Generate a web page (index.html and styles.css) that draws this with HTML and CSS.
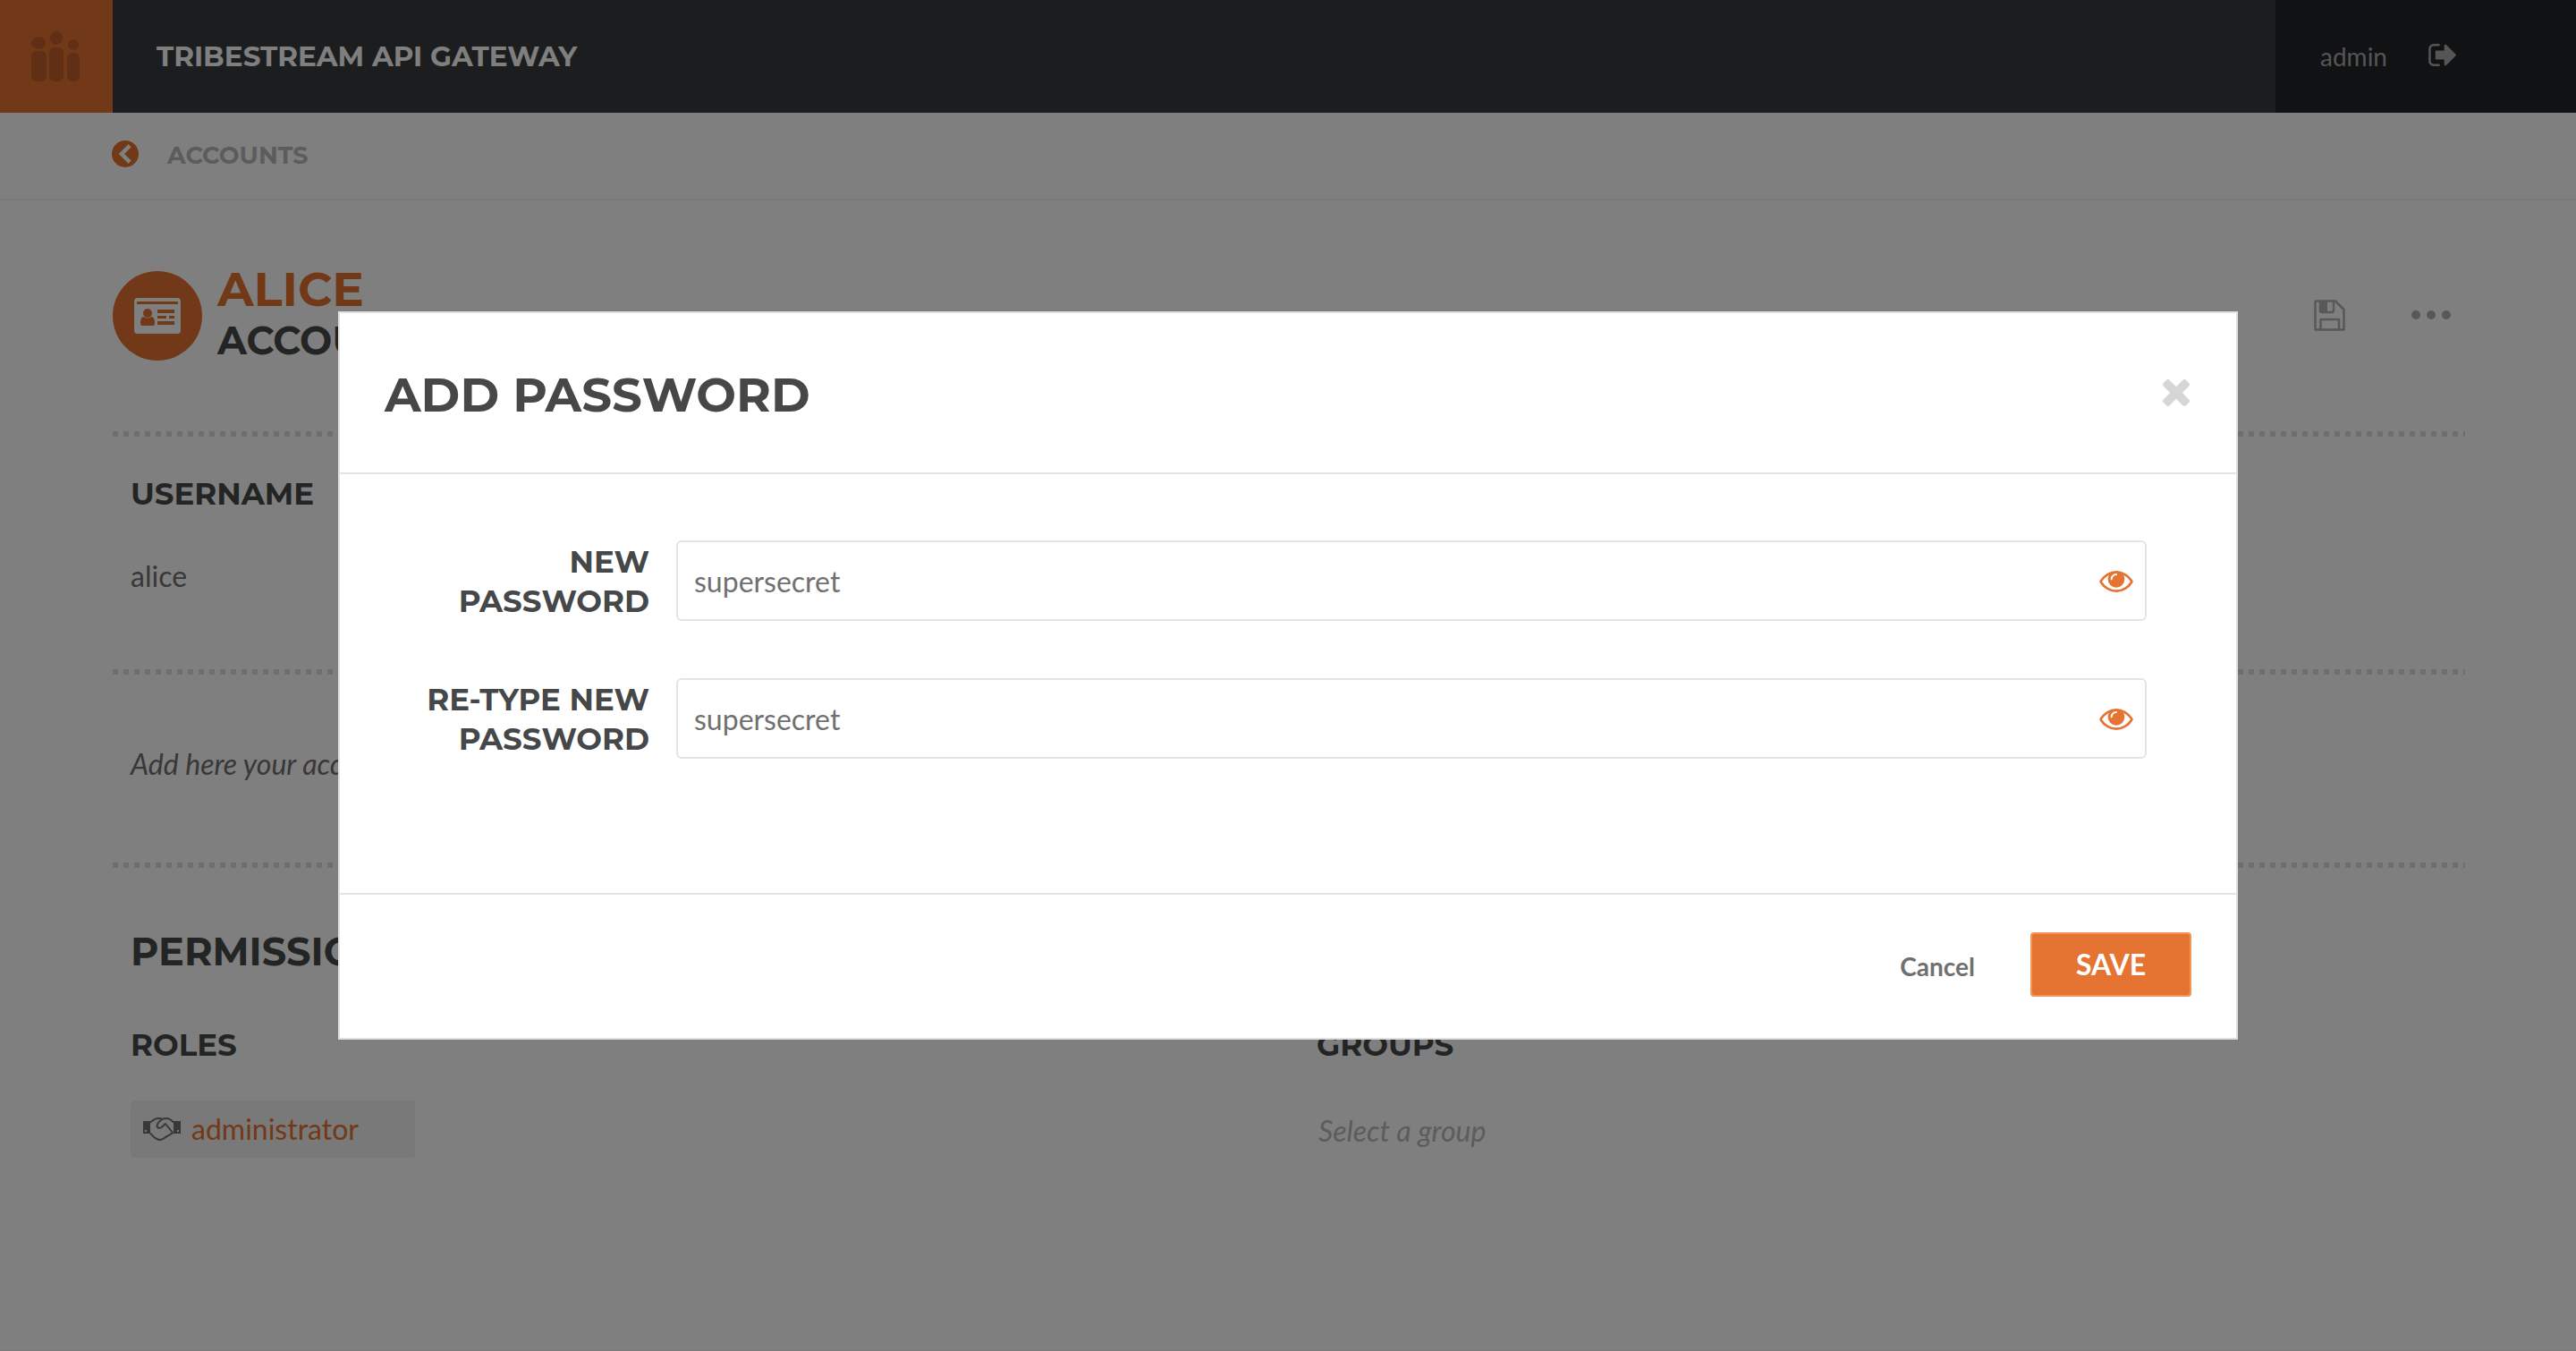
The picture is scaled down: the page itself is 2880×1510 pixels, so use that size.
FILE: index.html
```html
<!DOCTYPE html>
<html lang="en">
<head>
<meta charset="utf-8">
<title>Tribestream API Gateway</title>
<link rel="stylesheet" href="styles.css">
</head>
<body>
<div class="page">
  <header class="topbar">
    <a class="logo" href="#" aria-label="Home">
      <svg class="logo-icon" viewBox="0 0 54 56" aria-hidden="true">
        <rect x="0" y="22" width="17" height="34" rx="6"/><rect x="20" y="18" width="16" height="38" rx="6"/><rect x="40" y="24" width="14" height="32" rx="6"/>
        <ellipse cx="8" cy="13" rx="8" ry="7"/><ellipse cx="28" cy="7.500" rx="7" ry="7.500"/><ellipse cx="47" cy="15" rx="6" ry="6"/>
      </svg>
    </a>
    <h1 class="brand">TRIBESTREAM API GATEWAY</h1>
    <div class="session">
      <span class="user">admin</span>
      <button class="icon-button logout" type="button" aria-label="Log out">
        <svg class="logout-icon" viewBox="64 256 1568 1280"><path d="M704 1440q0 4 1 20t.5 26.500-3 23.500-10 19.500-20.500 6.500h-320q-119 0-203.500-84.500t-84.500-203.500v-704q0-119 84.500-203.500t203.500-84.500h320q13 0 22.500 9.500t9.500 22.500q0 4 1 20t.5 26.500-3 23.500-10 19.500-20.500 6.500h-320q-66 0-113 47t-47 113v704q0 66 47 113t113 47h312l11.500 1 11.500 3 8 5.500 7 9 2 13.500zm928-544q0 26-19 45l-544 544q-19 19-45 19t-45-19-19-45v-288h-448q-26 0-45-19t-19-45v-384q0-26 19-45t45-19h448v-288q0-26 19-45t45-19 45 19l544 544q19 19 19 45z"/></svg>
      </button>
    </div>
  </header>
  <nav class="crumbs">
    <a class="crumb" href="#">
      <svg class="back-icon" viewBox="0 0 30 30" aria-hidden="true"><circle cx="15" cy="15" r="15"/><path d="M18.500 7.500 11 15l7.500 7.500" fill="none" stroke="#fff" stroke-width="4.500" stroke-linecap="square"/></svg>
      <span>ACCOUNTS</span>
    </a>
  </nav>
  <main class="content">
    <div class="account-head">
      <span class="badge">
        <svg class="badge-icon" viewBox="0 0 52 40" aria-hidden="true">
          <rect width="52" height="40" rx="4" fill="#fff"/>
          <path d="M3 4h46v3H3zM26 13h19v4H26zM26 20h10v3H26zM39 20h6v3h-6zM26 26h19v4H26z"/>
          <circle cx="15" cy="17" r="5"/><path d="M7 28q0-7 4-7 4 3 8 0 4 0 4 7 0 3-2 3H9q-2 0-2-3z"/>
        </svg>
      </span>
      <div class="account-title">
        <h2 class="account-name">ALICE</h2>
        <p class="account-kind">ACCOUNT</p>
      </div>
      <div class="account-actions">
        <button class="icon-button" type="button" aria-label="Save account">
          <svg class="floppy-icon" viewBox="0 0 35 35"><path d="M3 1.500H24L33.500 11V33.500H1.500V3Q1.500 1.500 3 1.500zM7 2V12Q7 14 9 14H20Q22 14 22 12V2M7.500 33V22H28V33" fill="none" stroke="currentColor" stroke-width="2.500" stroke-linejoin="round"/><path d="M7 2h8v11H7z"/></svg>
        </button>
        <button class="icon-button" type="button" aria-label="More actions">
          <svg class="more-icon" viewBox="0 0 44 10"><circle cx="5" cy="5" r="5"/><circle cx="22" cy="5" r="5"/><circle cx="39" cy="5" r="5"/></svg>
        </button>
      </div>
    </div>
    <section class="block block-user">
      <h3 class="label">USERNAME</h3>
      <p class="value">alice</p>
    </section>
    <section class="block block-note">
      <p class="note">Add here your account</p>
    </section>
    <section class="block block-perms">
      <h2 class="section-title">PERMISSIONS</h2>
      <div class="columns">
        <div class="column">
          <h3 class="label">ROLES</h3>
          <a class="chip" href="#">
            <svg class="shake-icon" viewBox="0 0 42 26" aria-hidden="true">
              <path d="M0 4h8v14H0zM34 4h8v14h-8z"/>
              <path d="M8 5.500Q13 1 17 1q3 0 4 1 2-1 5-1 4 0 8 4.500M8 17.500Q14 25 19 25q3 0 6-3 6-3 9-5.500M21 2q-6 5-5.500 8 1.500 3 5 1L25 7l8 10" fill="none" stroke="currentColor" stroke-width="2" stroke-linejoin="round"/>
              <path d="M2 14h2v2H2zM38 14h2v2h-2z" fill="#f2f2f2"/>
            </svg>
            <span>administrator</span>
          </a>
        </div>
        <div class="column">
          <h3 class="label">GROUPS</h3>
          <p class="placeholder">Select a group</p>
        </div>
      </div>
    </section>
  </main>
</div>

<div class="backdrop">
  <form class="modal" role="dialog" aria-labelledby="modal-title">
    <header class="modal-head">
      <h2 class="modal-title" id="modal-title">ADD PASSWORD</h2>
      <button class="icon-button close" type="button" aria-label="Close">
        <svg class="close-icon" viewBox="302 366 1188 1188"><path d="M1490 1322q0 40-28 68l-136 136q-28 28-68 28t-68-28l-294-294-294 294q-28 28-68 28t-68-28l-136-136q-28-28-28-68t28-68l294-294-294-294q-28-28-28-68t28-68l136-136q28-28 68-28t68 28l294 294 294-294q28-28 68-28t68 28l136 136q28 28 28 68t-28 68l-294 294 294 294q28 28 28 68z"/></svg>
      </button>
    </header>
    <div class="modal-body">
      <div class="field">
        <label class="field-label" for="pw">NEW PASSWORD</label>
        <div class="field-control">
          <input class="field-input" id="pw" type="text" value="supersecret">
          <button class="icon-button reveal" type="button" aria-label="Hide password">
            <svg class="eye-icon" viewBox="0 384 1792 1152"><path d="M1664 960q-152-236-381-353 61 104 61 225 0 185-131.500 316.500t-316.500 131.500-316.500-131.500-131.500-316.500q0-121 61-225-229 117-381 353 133 205 333.500 326.500t434.500 121.500 434.500-121.500 333.500-326.500zm-720-384q0-20-14-34t-34-14q-125 0-214.500 89.500t-89.500 214.500q0 20 14 34t34 14 34-14 14-34q0-86 61-147t147-61q20 0 34-14t14-34zm848 384q0 34-20 69-140 230-376.500 368.500t-499.500 138.500-499.500-139-376.500-368q-20-35-20-69t20-69q140-229 376.500-368t499.500-139 499.500 139 376.500 368q20 35 20 69z"/></svg>
          </button>
        </div>
      </div>
      <div class="field">
        <label class="field-label" for="pw2">RE-TYPE NEW PASSWORD</label>
        <div class="field-control">
          <input class="field-input" id="pw2" type="text" value="supersecret">
          <button class="icon-button reveal" type="button" aria-label="Hide retyped password">
            <svg class="eye-icon" viewBox="0 384 1792 1152"><path d="M1664 960q-152-236-381-353 61 104 61 225 0 185-131.500 316.500t-316.500 131.500-316.500-131.500-131.500-316.500q0-121 61-225-229 117-381 353 133 205 333.500 326.500t434.500 121.500 434.500-121.500 333.500-326.500zm-720-384q0-20-14-34t-34-14q-125 0-214.500 89.500t-89.500 214.500q0 20 14 34t34 14 34-14 14-34q0-86 61-147t147-61q20 0 34-14t14-34zm848 384q0 34-20 69-140 230-376.500 368.500t-499.500 138.500-499.500-139-376.500-368q-20-35-20-69t20-69q140-229 376.500-368t499.500-139 499.500 139 376.500 368q20 35 20 69z"/></svg>
          </button>
        </div>
      </div>
    </div>
    <footer class="modal-foot">
      <button class="cancel" type="button">Cancel</button>
      <button class="save" type="submit">SAVE</button>
    </footer>
  </form>
</div>
</body>
</html>
```
FILE: styles.css
```css
:root {
  --orange: #e57331;
  --ink: #464a48;
  --text: #707070;
  --line: #e4e4e4;
  --display: Montserrat, Inter, "Liberation Sans", sans-serif;
  --body: Lato, "Liberation Sans", sans-serif;
}

* { box-sizing: border-box; }

body {
  margin: 0;
  background: #fff;
  color: var(--text);
  font-family: var(--body);
  font-size: 32px;
  line-height: 44px;
}

h1, h2, h3, p { margin: 0; }

a { color: inherit; text-decoration: none; }

svg { display: block; fill: currentColor; }

button { font-family: inherit; cursor: pointer; }

.icon-button {
  padding: 0;
  border: 0;
  background: none;
  color: inherit;
}

.page { min-height: 100vh; border-bottom: 1px solid #f2f2f2; }

.topbar {
  display: flex;
  height: 126px;
  background: #383b3e;
}

.logo {
  display: flex;
  align-items: flex-start;
  justify-content: center;
  width: 126px;
  padding: 35px 2px 0 0;
  background: var(--orange);
  color: #c05e2a;
}

.logo-icon { width: 54px; height: 56px; }

.brand {
  flex: 1;
  padding-left: 49px;
  color: #fff;
  font: 700 31px/126px var(--display);
}

.session {
  display: flex;
  align-items: center;
  gap: 46px;
  width: 336px;
  padding-left: 50px;
  background: #222427;
  color: #aaa;
  font-size: 28px;
}

.logout { padding-bottom: 4px; }

.logout-icon { width: 31px; height: 25px; }

.crumbs {
  display: flex;
  align-items: center;
  height: 98px;
  padding: 0 125px;
  border-bottom: 2px solid #f2f2f2;
}

.crumb {
  display: flex;
  align-items: center;
  gap: 32px;
  color: #b8b8b8;
  font: 700 27px/44px var(--display);
}

.back-icon {
  width: 30px;
  height: 30px;
  margin-bottom: 4px;
  color: var(--orange);
}

.content { padding: 0 124px 0 126px; }

.account-head {
  display: flex;
  align-items: center;
  height: 258px;
}

.badge {
  display: grid;
  place-items: center;
  width: 100px;
  height: 100px;
  border-radius: 50%;
  background: var(--orange);
  color: var(--orange);
}

.badge-icon { width: 52px; height: 40px; }

.account-title {
  flex: 1;
  padding: 0 0 4px 17px;
  font-family: var(--display);
  font-weight: 700;
}

.account-name { color: var(--orange); font-size: 53px; line-height: 60px; }

.account-kind { color: var(--ink); font-size: 43px; line-height: 56px; }

.account-actions {
  display: flex;
  align-items: center;
  gap: 74px;
  padding: 0 16px 2px 0;
  color: #b0b0b0;
}

.floppy-icon { width: 35px; height: 35px; }

.more-icon { width: 44px; height: 10px; }

.block { padding: 0 20px; }

.block::before {
  content: "";
  display: block;
  height: 6px;
  margin: 0 -20px;
  background: repeating-linear-gradient(90deg, #dcdcdc 0 6px, transparent 6px 12px);
}

.block-user { height: 266px; }

.label {
  padding-top: 42px;
  color: var(--ink);
  font: 700 34px/44px var(--display);
}

.value { padding-top: 48px; }

.block-note { height: 216px; }

.note { padding-top: 78px; font-style: italic; }

.section-title {
  padding-top: 66px;
  color: var(--ink);
  font: 700 43px/56px var(--display);
}

.columns {
  display: grid;
  grid-template-columns: 1fr 1fr;
  gap: 62px;
  padding-top: 12px;
}

.chip {
  display: inline-flex;
  align-items: center;
  gap: 12px;
  width: 318px;
  height: 64px;
  margin-top: 40px;
  padding-left: 14px;
  border-radius: 4px;
  background: #f2f2f2;
  color: var(--orange);
}

.shake-icon { width: 42px; height: 26px; color: var(--text); }

.placeholder { padding: 52px 2px 0; color: #b8b8b8; font-style: italic; }

.backdrop {
  position: fixed;
  inset: 0;
  padding: 348px 378px;
  background: rgba(0, 0, 0, .5);
}

.modal {
  border: 2px solid #e0e0e0;
  background: #fff;
}

.modal-head {
  display: flex;
  align-items: center;
  justify-content: space-between;
  height: 180px;
  padding: 0 52px 0 50px;
  border-bottom: 2px solid var(--line);
}

.modal-title {
  padding-top: 4px;
  color: #464749;
  font: 700 53px/60px var(--display);
}

.close { color: #d6d6d6; }

.close-icon { width: 30px; height: 30px; }

.modal-body {
  display: grid;
  gap: 64px;
  align-content: start;
  height: 468px;
  padding: 74px 100px 0 50px;
}

.field { display: flex; align-items: center; gap: 30px; }

.field-label {
  width: 296px;
  padding-top: 2px;
  color: #464749;
  font: 700 34px/44px var(--display);
  text-align: right;
}

.field-control { position: relative; flex: 1; }

.field-input {
  display: block;
  width: 100%;
  height: 90px;
  padding: 0 80px 0 18px;
  border: 2px solid var(--line);
  border-radius: 6px;
  background: #fff;
  color: var(--text);
  font: 32px var(--body);
}

.reveal { position: absolute; top: 34px; right: 15px; color: var(--orange); }

.eye-icon { width: 38px; height: 24px; }

.modal-foot {
  display: flex;
  align-items: center;
  justify-content: flex-end;
  gap: 62px;
  height: 162px;
  padding: 0 50px 4px;
  border-top: 2px solid var(--line);
}

.cancel {
  padding: 4px 0 0;
  border: 0;
  background: none;
  color: var(--text);
  font: 700 28px/44px var(--body);
}

.save {
  width: 180px;
  height: 72px;
  border: 2px solid #f59458;
  border-radius: 4px;
  background: var(--orange);
  color: #fff;
  font: 700 32px/44px var(--body);
}
```
